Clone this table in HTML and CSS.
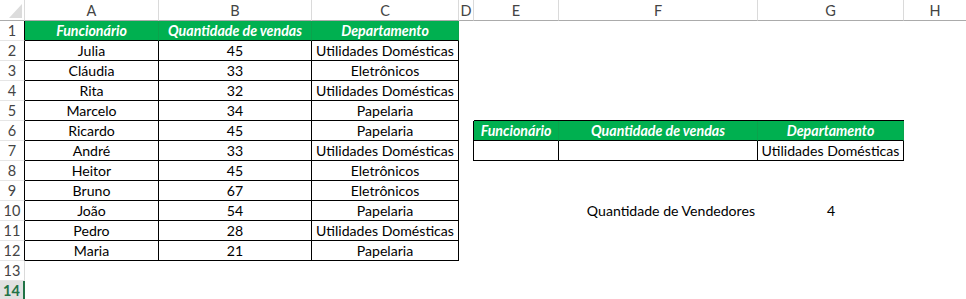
FILE: index.html
```html
<!DOCTYPE html>
<html lang="pt">
<head>
<meta charset="utf-8">
<title>Planilha</title>
<link rel="stylesheet" href="styles.css">
</head>
<body>
<div class="sheet">
  <div class="row">
    <div class="ch corner"><span class="tri"></span></div>
    <div class="ch">A</div><div class="ch">B</div><div class="ch">C</div><div class="ch">D</div>
    <div class="ch">E</div><div class="ch">F</div><div class="ch">G</div><div class="ch last">H</div>
  </div>
  <div class="row">
    <div class="rh edge">1</div>
    <div class="g">Funcionário</div><div class="g">Quantidade de vendas</div><div class="g">Departamento</div>
    <div class="c"></div><div class="c"></div><div class="c"></div><div class="c"></div><div class="c"></div>
  </div>
  <div class="row">
    <div class="rh edge">2</div>
    <div class="d">Julia</div><div class="d">45</div><div class="d">Utilidades Domésticas</div>
    <div class="c"></div><div class="c"></div><div class="c"></div><div class="c"></div><div class="c"></div>
  </div>
  <div class="row">
    <div class="rh edge">3</div>
    <div class="d">Cláudia</div><div class="d">33</div><div class="d">Eletrônicos</div>
    <div class="c"></div><div class="c"></div><div class="c"></div><div class="c"></div><div class="c"></div>
  </div>
  <div class="row">
    <div class="rh edge">4</div>
    <div class="d">Rita</div><div class="d">32</div><div class="d">Utilidades Domésticas</div>
    <div class="c"></div><div class="c"></div><div class="c"></div><div class="c"></div><div class="c"></div>
  </div>
  <div class="row">
    <div class="rh edge">5</div>
    <div class="d">Marcelo</div><div class="d">34</div><div class="d">Papelaria</div>
    <div class="c"></div><div class="c tb"></div><div class="c tb"></div><div class="c tb"></div><div class="c"></div>
  </div>
  <div class="row">
    <div class="rh edge">6</div>
    <div class="d">Ricardo</div><div class="d">45</div><div class="d">Papelaria</div>
    <div class="c lb"></div><div class="g">Funcionário</div><div class="g">Quantidade de vendas</div><div class="g">Departamento</div><div class="c"></div>
  </div>
  <div class="row">
    <div class="rh edge">7</div>
    <div class="d">André</div><div class="d">33</div><div class="d">Utilidades Domésticas</div>
    <div class="c lb"></div><div class="d"></div><div class="d"></div><div class="d">Utilidades Domésticas</div><div class="c"></div>
  </div>
  <div class="row">
    <div class="rh edge">8</div>
    <div class="d">Heitor</div><div class="d">45</div><div class="d">Eletrônicos</div>
    <div class="c"></div><div class="c"></div><div class="c"></div><div class="c"></div><div class="c"></div>
  </div>
  <div class="row">
    <div class="rh edge">9</div>
    <div class="d">Bruno</div><div class="d">67</div><div class="d">Eletrônicos</div>
    <div class="c"></div><div class="c"></div><div class="c"></div><div class="c"></div><div class="c"></div>
  </div>
  <div class="row">
    <div class="rh edge">10</div>
    <div class="d">João</div><div class="d">54</div><div class="d">Papelaria</div>
    <div class="c"></div><div class="c"></div><div class="c right">Quantidade de Vendedores</div><div class="c center">4</div><div class="c"></div>
  </div>
  <div class="row">
    <div class="rh edge">11</div>
    <div class="d">Pedro</div><div class="d">28</div><div class="d">Utilidades Domésticas</div>
    <div class="c"></div><div class="c"></div><div class="c"></div><div class="c"></div><div class="c"></div>
  </div>
  <div class="row">
    <div class="rh edge">12</div>
    <div class="d">Maria</div><div class="d">21</div><div class="d">Papelaria</div>
    <div class="c"></div><div class="c"></div><div class="c"></div><div class="c"></div><div class="c"></div>
  </div>
  <div class="row">
    <div class="rh">13</div>
    <div class="c"></div><div class="c"></div><div class="c"></div>
    <div class="c"></div><div class="c"></div><div class="c"></div><div class="c"></div><div class="c"></div>
  </div>
  <div class="row">
    <div class="rh sel">14</div>
    <div class="c"></div><div class="c"></div><div class="c"></div>
    <div class="c"></div><div class="c"></div><div class="c"></div><div class="c"></div><div class="c"></div>
  </div>
</div>
</body>
</html>
```

FILE: styles.css
```css
html, body {
  margin: 0;
  padding: 0;
  background: #ffffff;
  overflow: hidden;
}

body {
  font-family: Lato, "Liberation Sans", sans-serif;
  color: #000;
}

.sheet {
  display: grid;
  grid-template-columns: 25px 134px 153px 147px 15px 85px 199px 146px 1fr;
  grid-template-rows: 21px repeat(14, 20px);
  width: 966px;
}

.row {
  display: contents;
}

.sheet .row > div {
  box-sizing: border-box;
  font-size: 14.1px;
  line-height: 19px;
  white-space: nowrap;
  overflow: hidden;
  text-align: center;
}

.ch {
  color: #444;
  border-right: 1px solid #dadada;
  border-bottom: 1px solid #ababab;
  padding-top: 1px;
}

.sheet .row > .ch,
.sheet .row > .rh {
  font-size: 14.5px;
}

.ch.last {
  border-right: none;
}

.corner {
  display: flex;
  justify-content: flex-end;
  align-items: flex-end;
  padding: 0 2px 2px 0;
}

.tri {
  display: block;
  width: 13px;
  height: 14px;
  background: #dcdcdc;
  clip-path: polygon(100% 0, 100% 100%, 0 100%);
}

.rh {
  color: #444;
  border-right: 1px solid #dadada;
  border-bottom: 1px solid #e6e6e6;
}

.rh.edge {
  border-right-color: #000;
}

.rh.sel {
  background: #e1e1e1;
  color: #217346;
  font-weight: bold;
  border-right: 2px solid #217346;
}

.sheet .row > .g {
  background: #00b050;
  color: #fff;
  font-size: 14.2px;
  font-weight: bold;
  font-style: italic;
  border-right: 1px solid #0aa34c;
  border-bottom: 1px solid #000;
}

.d {
  border-right: 1px solid #000;
  border-bottom: 1px solid #000;
}

.tb {
  border-bottom: 1px solid #000;
}

.lb {
  border-right: 1px solid #000;
}

.sheet .row > .right {
  text-align: right;
  padding-right: 3px;
}

.center {
  text-align: center;
}
```
